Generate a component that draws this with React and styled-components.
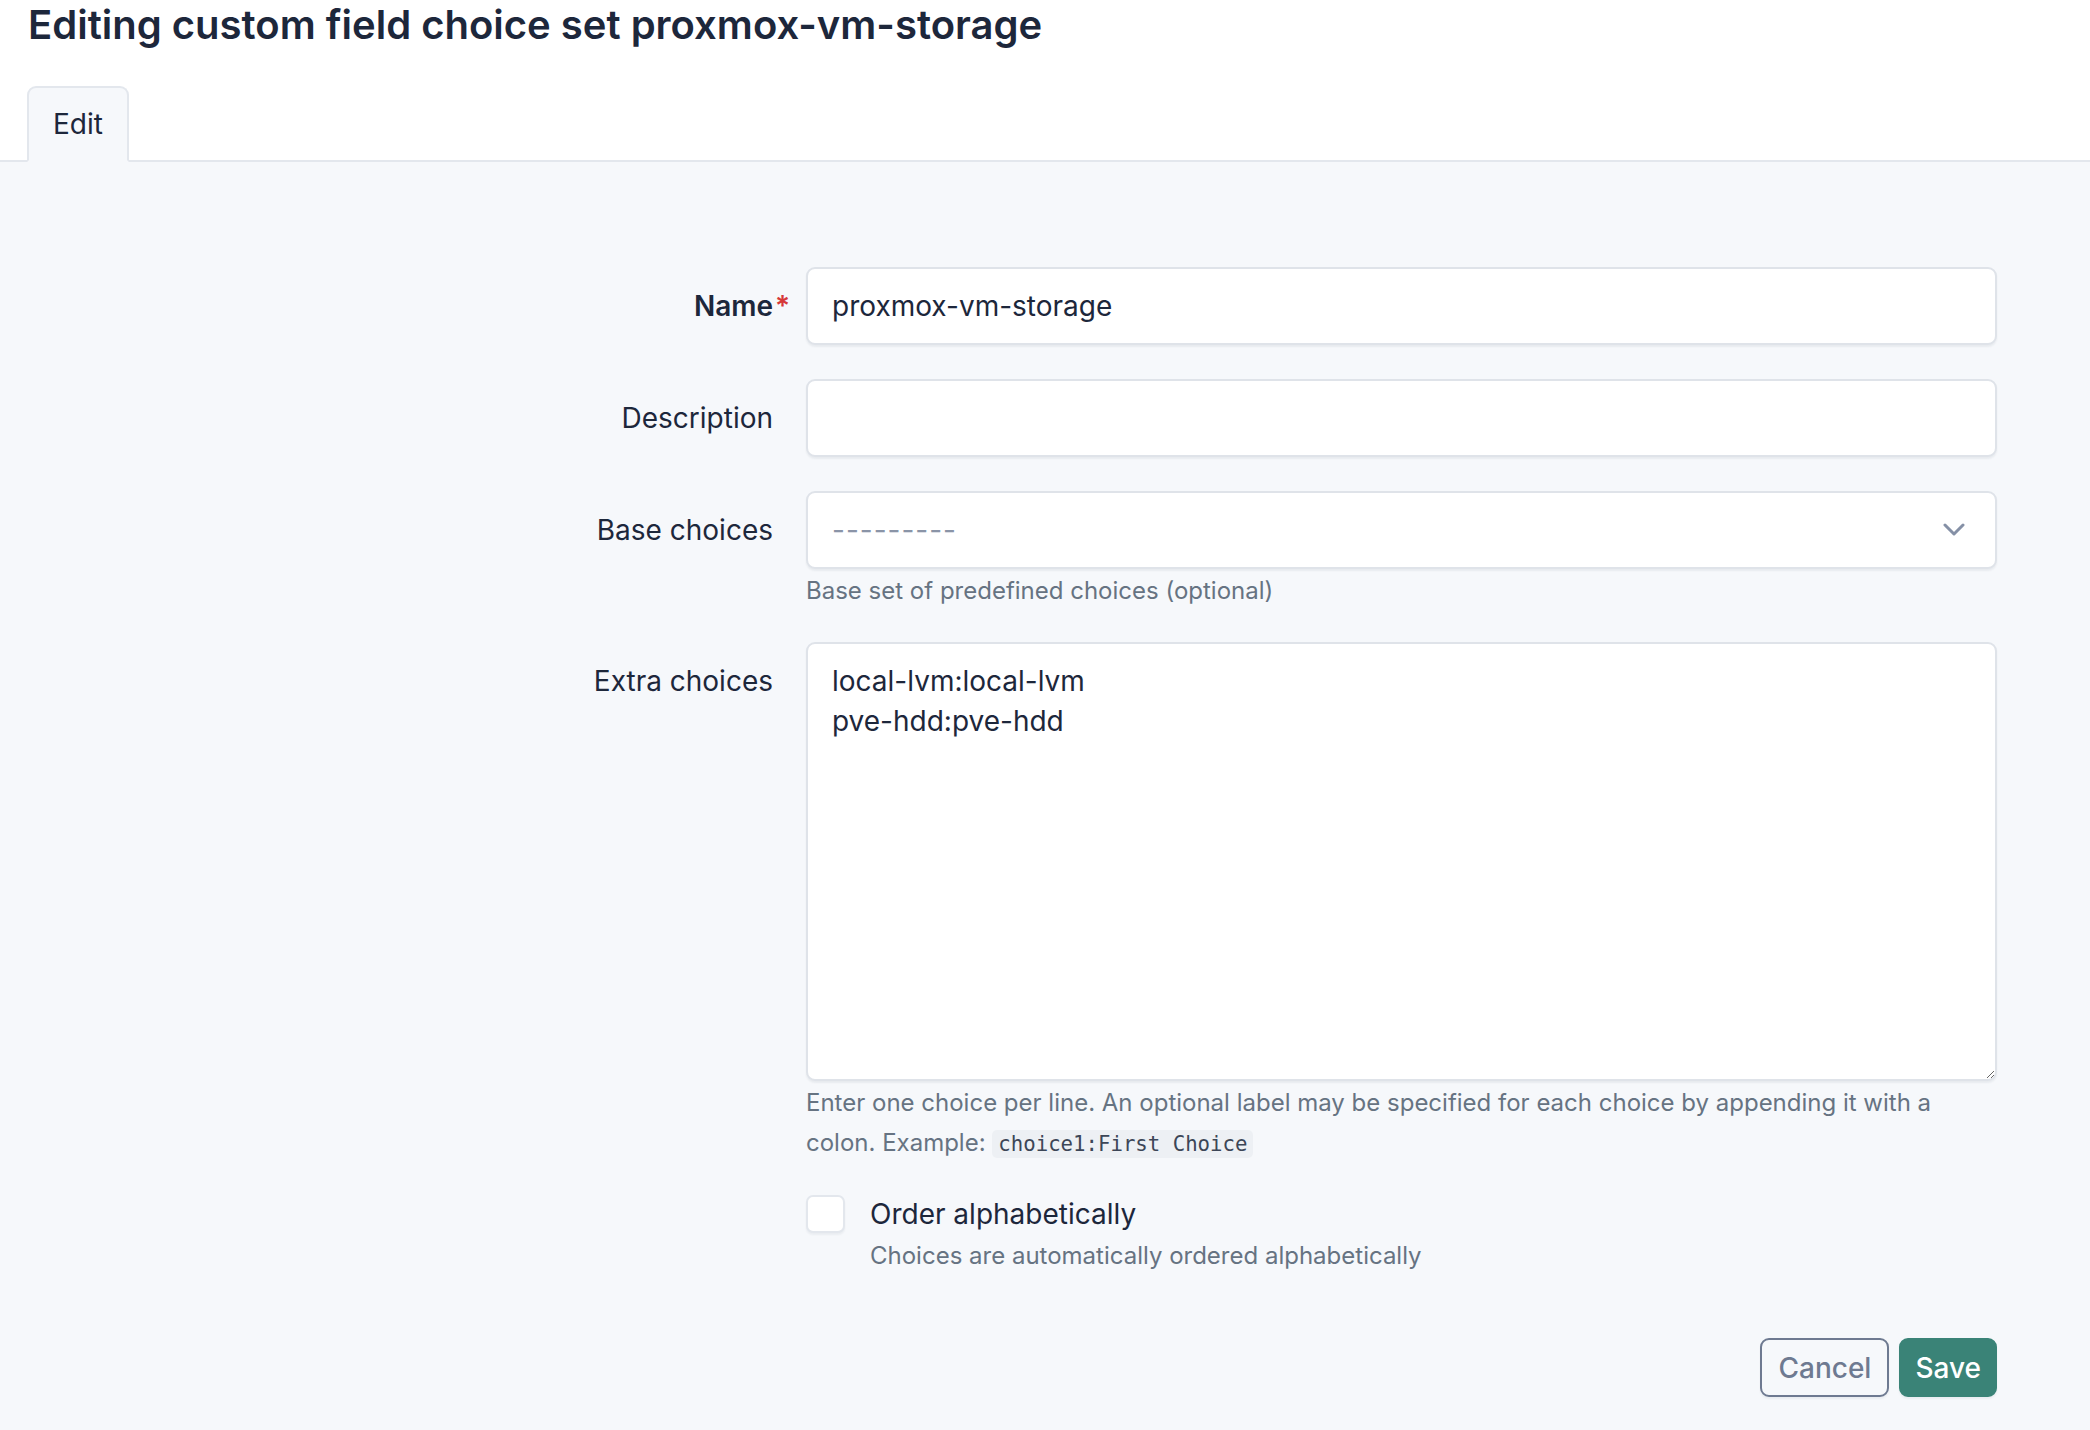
import React from "react";
import styled, { createGlobalStyle } from "styled-components";

const GlobalStyle = createGlobalStyle`
  html, body {
    margin: 0;
    padding: 0;
    background: #f6f8fb;
  }
  body {
    font-family: Inter, "Noto Sans", sans-serif;
    color: #1d273b;
  }
  * { box-sizing: border-box; }
`;

const Page = styled.div`
  min-height: 1430px;
  display: flex;
  flex-direction: column;
`;

const Header = styled.div`
  background: #ffffff;
  padding: 0 27px;
  border-bottom: 2px solid #e3e7ed;
`;

const Title = styled.h1`
  margin: 0;
  padding: 2px 0 0 1px;
  font-size: 40px;
  line-height: 46px;
  font-weight: 600;
  color: #1d273b;
`;

const Tabs = styled.div`
  display: flex;
  margin-top: 38px;
  margin-bottom: -2px;
`;

const Tab = styled.div`
  height: 76px;
  padding: 0 24px;
  display: flex;
  align-items: center;
  font-size: 28px;
  line-height: 40px;
  color: #1d273b;
  background: ${(p) => (p.active ? "#f6f8fb" : "transparent")};
  border: 2px solid #e3e7ed;
  border-bottom-color: ${(p) => (p.active ? "#f6f8fb" : "#e3e7ed")};
  border-radius: 9px 9px 0 0;
`;

const Content = styled.div`
  flex: 1;
  padding: 105px 93px 0 0;
`;

const Row = styled.div`
  display: grid;
  grid-template-columns: 1fr 1191px;
  column-gap: 33px;
  margin-bottom: ${(p) => (p.tight ? 31 : 34)}px;
`;

const Label = styled.label`
  position: relative;
  text-align: right;
  font-size: 28px;
  line-height: 40px;
  padding-top: 19px;
  font-weight: ${(p) => (p.required ? 600 : 400)};
  color: #1d273b;
`;

const Star = styled.span`
  position: absolute;
  left: 100%;
  margin-left: 2px;
  color: #d63939;
  font-weight: 600;
  font-size: 28px;
`;

const Field = styled.div`
  display: flex;
  flex-direction: column;
`;

const controlBase = `
  width: 100%;
  background: #ffffff;
  border: 2px solid #dfe3e9;
  border-radius: 9px;
  box-shadow: 0 2px 2px rgba(24, 36, 51, 0.06);
  font-family: Inter, "Noto Sans", sans-serif;
  font-size: 28px;
  line-height: 40px;
  color: #1d273b;
  padding: 17px 24px;
  outline: none;
`;

const Input = styled.input`
  ${controlBase}
  height: 78px;
`;

const Select = styled.div`
  ${controlBase}
  height: 78px;
  display: flex;
  align-items: center;
  justify-content: space-between;
  padding-right: 30px;
`;

const Placeholder = styled.span`
  color: #8a94a7;
  letter-spacing: 1px;
`;

const TextArea = styled.textarea`
  ${controlBase}
  height: 439px;
  resize: vertical;
  display: block;
`;

const Help = styled.div`
  margin-top: 2px;
  font-size: 24px;
  line-height: 40px;
  color: #667382;
`;

const Code = styled.code`
  font-family: "DejaVu Sans Mono", "Liberation Mono", monospace;
  font-size: 20.7px;
  line-height: 30px;
  color: #3c4657;
  background: #edf0f4;
  border-radius: 5px;
  padding: 2px 6px;
`;

const CheckRow = styled.div`
  display: flex;
  gap: 25px;
  padding-top: 1px;
`;

const CheckBox = styled.span`
  flex: none;
  width: 39px;
  height: 38px;
  background: #ffffff;
  border: 2px solid #e3e7ed;
  border-radius: 7px;
  box-shadow: 0 2px 2px rgba(24, 36, 51, 0.05);
`;

const CheckText = styled.div`
  display: flex;
  flex-direction: column;
  margin-top: -1px;
`;

const CheckLabel = styled.span`
  font-size: 28px;
  line-height: 40px;
  color: #1d273b;
`;

const CheckHint = styled.span`
  font-size: 24px;
  line-height: 40px;
  color: #667382;
  margin-top: 2px;
`;

const Actions = styled.div`
  display: flex;
  justify-content: flex-end;
  gap: 10px;
  margin-top: 62px;
`;

const Button = styled.button`
  height: 59px;
  padding: 0 ${(p) => (p.primary ? 14 : 16)}px;
  font-family: Inter, "Noto Sans", sans-serif;
  font-size: 28px;
  font-weight: 500;
  border-radius: 9px;
  border: 2px solid ${(p) => (p.primary ? "#3a8377" : "#6e7a91")};
  background: ${(p) => (p.primary ? "#3a8377" : "transparent")};
  color: ${(p) => (p.primary ? "#ffffff" : "#6e7a91")};
  box-shadow: 0 2px 2px rgba(24, 36, 51, 0.05);
`;

const Chevron = () => (
  <svg width="22" height="14" viewBox="0 0 22 14" fill="none" stroke="#8590a6" strokeWidth="3" strokeLinecap="round" strokeLinejoin="round">
    <path d="M2 2l9 9 9-9" />
  </svg>
);

export default function App() {
  return (
    <>
      <GlobalStyle />
      <Page>
        <Header>
          <Title>Editing custom field choice set proxmox-vm-storage</Title>
          <Tabs>
            <Tab active>Edit</Tab>
          </Tabs>
        </Header>
        <Content>
          <Row>
            <Label required>
              Name<Star>*</Star>
            </Label>
            <Field>
              <Input defaultValue="proxmox-vm-storage" />
            </Field>
          </Row>
          <Row>
            <Label>Description</Label>
            <Field>
              <Input defaultValue="" />
            </Field>
          </Row>
          <Row tight>
            <Label>Base choices</Label>
            <Field>
              <Select>
                <Placeholder>---------</Placeholder>
                <Chevron />
              </Select>
              <Help>Base set of predefined choices (optional)</Help>
            </Field>
          </Row>
          <Row tight>
            <Label>Extra choices</Label>
            <Field>
              <TextArea defaultValue={"local-lvm:local-lvm\npve-hdd:pve-hdd"} />
              <Help>
                Enter one choice per line. An optional label may be specified for each choice by appending it with a
                colon. Example: <Code>choice1:First Choice</Code>
              </Help>
            </Field>
          </Row>
          <Row>
            <div />
            <CheckRow>
              <CheckBox />
              <CheckText>
                <CheckLabel>Order alphabetically</CheckLabel>
                <CheckHint>Choices are automatically ordered alphabetically</CheckHint>
              </CheckText>
            </CheckRow>
          </Row>
          <Actions>
            <Button>Cancel</Button>
            <Button primary>Save</Button>
          </Actions>
        </Content>
      </Page>
    </>
  );
}
